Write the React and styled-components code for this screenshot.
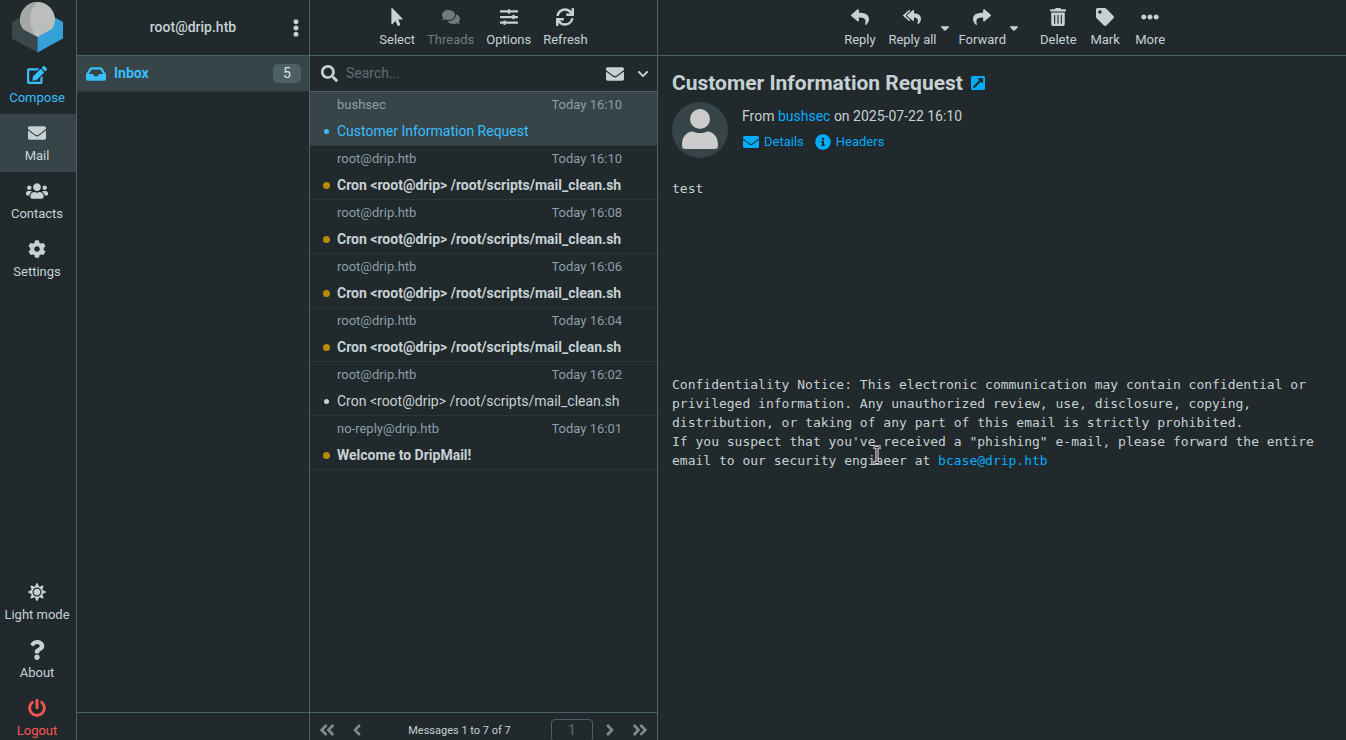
import React, { useState } from "react";
import styled, { createGlobalStyle, css } from "styled-components";
import {
  FaAngleDoubleLeft,
  FaAngleDoubleRight,
  FaAngleLeft,
  FaAngleRight,
  FaCaretDown,
  FaChevronDown,
  FaCog,
  FaComments,
  FaEdit,
  FaEllipsisH,
  FaEllipsisV,
  FaEnvelope,
  FaExternalLinkSquareAlt,
  FaInbox,
  FaInfoCircle,
  FaMousePointer,
  FaPowerOff,
  FaQuestion,
  FaReply,
  FaReplyAll,
  FaSearch,
  FaShare,
  FaSlidersH,
  FaSun,
  FaSync,
  FaTag,
  FaTrashAlt,
  FaUsers
} from "react-icons/fa";

const colors = {
  bg: "#21292c",
  selected: "#374549",
  border: "#4d6066",
  rowBorder: "#2c373a",
  text: "#c5d1d3",
  muted: "#8b9fa7",
  hint: "#5f6f74",
  main: "#37beff",
  link: "#00acff",
  danger: "#ff5552",
  flag: "#b98a04"
};

const GlobalStyle = createGlobalStyle`
  * { box-sizing: border-box; }
  body {
    margin: 0;
    overflow: hidden;
    background: ${colors.bg};
    color: ${colors.text};
    font-family: Roboto, sans-serif;
    font-size: 14px;
    line-height: 21px;
  }
  button, input { font: inherit; color: inherit; }
  button { background: none; border: 0; padding: 0; cursor: pointer; }
  a { color: ${colors.link}; text-decoration: none; }
  svg { display: block; flex: none; }
`;

// a little taller than the window, the bottom bars run off its edge
const Layout = styled.div`
  display: flex;
  height: calc(100vh + 7px);
`;

const TaskMenu = styled.nav`
  display: flex;
  flex-direction: column;
  flex: none;
  width: 77px;
  border-right: 1px solid ${colors.border};
`;

const Logo = styled.svg`
  width: 52px;
  height: 52px;
  margin: 1px auto 3px 11px;
`;

const TaskLink = styled.a`
  display: flex;
  flex-direction: column;
  align-items: center;
  gap: 4px;
  height: 58px;
  padding: 9px 2px 0 0;
  font-size: 13px;
  line-height: 18px;
  white-space: nowrap;
  color: ${p => p.$color || colors.text};
  background: ${p => (p.$selected ? colors.selected : "transparent")};
  svg {
    height: 20px;
  }
`;

const Spacer = styled.div`
  flex: 1;
`;

const Column = styled.section`
  display: flex;
  flex-direction: column;
  min-width: 0;
  border-right: 1px solid ${colors.border};
  ${p => (p.$width ? css`flex: 0 0 ${p.$width}px;` : css`flex: 1; border-right: 0;`)}
`;

const Header = styled.header`
  display: flex;
  justify-content: center;
  flex: none;
  height: 56px;
  border-bottom: 1px solid ${colors.border};
`;

const AccountHeader = styled(Header)`
  align-items: center;
  padding: 0 3px 0 23px;
`;

const Account = styled.h2`
  flex: 1;
  margin: 0;
  font-size: 14px;
  font-weight: 500;
  text-align: center;
`;

const IconButton = styled.button`
  display: flex;
  align-items: center;
  justify-content: center;
  width: ${p => p.$width || 20}px;
  height: 28px;
  color: ${p => (p.$dim ? "#7c888b" : colors.text)};
`;

const Toolbar = styled(Header)`
  padding-left: ${p => (p.$shift ? 6 : 0)}px;
`;

const ToolButton = styled.button`
  display: flex;
  flex-direction: column;
  align-items: center;
  gap: 4px;
  min-width: ${p => p.$min || 0}px;
  padding: 8px 6px 0;
  font-size: 13px;
  line-height: 19px;
  white-space: nowrap;
  &:disabled {
    color: #6f7a7d;
  }
`;

const Caret = styled.button`
  display: flex;
  align-items: center;
  justify-content: center;
  width: 12px;
  height: 55px;
  margin: 0 ${p => (p.$wide ? 14 : 2)}px 0 -4px;
`;

const Folder = styled.a`
  display: flex;
  align-items: center;
  gap: 8px;
  height: 36px;
  padding: 0 8px 0 9px;
  border-bottom: 1px solid #2c373a;
  background: ${colors.selected};
  color: ${colors.main};
  font-weight: 700;
`;

const Badge = styled.span`
  margin-left: auto;
  min-width: 28px;
  border-radius: 5px;
  background: ${colors.border};
  color: #dbe3e5;
  font-weight: 400;
  line-height: 19px;
  text-align: center;
`;

const Footer = styled.footer`
  display: flex;
  align-items: center;
  flex: none;
  height: 35px;
  margin-top: auto;
  padding: 0 2px 0 7px;
  border-top: 1px solid ${colors.border};
  font-size: 12px;
`;

const SearchBar = styled.form`
  display: flex;
  align-items: center;
  flex: none;
  height: 36px;
  padding: 0 0 0 11px;
  border-bottom: 1px solid ${colors.border};
`;

const SearchInput = styled.input`
  flex: 1;
  min-width: 0;
  padding: 0 8px;
  border: 0;
  outline: 0;
  background: none;
  &::placeholder {
    color: ${colors.hint};
    opacity: 1;
  }
`;

const MessageList = styled.ul`
  margin: 0;
  padding: 0;
  list-style: none;
`;

const MessageRow = styled.li`
  display: grid;
  grid-template-columns: 27px 1fr auto;
  grid-template-rows: 25px 28px;
  align-items: center;
  height: 54px;
  padding: 0 35px 0 0;
  border-bottom: 1px solid ${colors.rowBorder};
  background: ${p => (p.$selected ? colors.selected : "transparent")};
  cursor: pointer;
`;

const Meta = styled.span`
  color: ${colors.muted};
  font-size: 13px;
  ${p => p.$first && css`grid-column: 2;`}
`;

const Dot = styled.span`
  justify-self: end;
  width: ${p => (p.$unread ? 7 : 5)}px;
  height: ${p => (p.$unread ? 7 : 5)}px;
  margin-right: ${p => (p.$unread ? 7 : 8)}px;
  border-radius: 50%;
  background: ${p => p.$color};
`;

const Subject = styled.a`
  grid-column: 2 / 4;
  overflow: hidden;
  white-space: nowrap;
  color: ${p => (p.$selected ? colors.main : colors.text)};
  font-weight: ${p => (p.$unread ? 700 : 400)};
`;

const Count = styled.span`
  flex: 1;
  padding-right: 9px;
  font-size: 11px;
  text-align: center;
`;

const PageInput = styled.input`
  width: 42px;
  height: 23px;
  margin-right: 2px;
  border: 1px solid ${colors.border};
  border-radius: 4px;
  background: none;
  color: ${colors.hint};
  font-size: 14px;
  text-align: center;
`;

const MessageHeader = styled.div`
  padding: 14px 14px 0;
`;

const Title = styled.h1`
  display: flex;
  align-items: center;
  gap: 7px;
  margin: 0;
  font-size: 21px;
  font-weight: 700;
  line-height: 26px;
`;

const Sender = styled.div`
  display: flex;
  gap: 14px;
  margin-top: 6px;
`;

const Photo = styled.svg`
  width: 56px;
  height: 56px;
`;

const Summary = styled.p`
  margin: 4px 0;
`;

const HeaderLinks = styled.div`
  display: flex;
  gap: 10px;
  font-size: 13px;
`;

const HeaderLink = styled.a`
  display: flex;
  align-items: center;
  gap: 5px;
  padding-left: 1px;
`;

const MessageBody = styled.article`
  position: relative;
  padding: 21px 14px;
  font-family: "DejaVu Sans Mono", monospace;
  font-size: 13px;
  line-height: 19px;
`;

const Paragraph = styled.p`
  margin: 0;
  & + & {
    margin-top: ${p => (p.$notice ? 177 : 0)}px;
  }
`;

const Pointer = styled.svg`
  position: absolute;
  left: 213px;
  top: 287px;
  width: 12px;
  height: 20px;
`;

const messages = [
  { id: 7, from: "bushsec", time: "16:10", subject: "Customer Information Request" },
  { id: 6, from: "root@drip.htb", time: "16:10", subject: "Cron <root@drip> /root/scripts/mail_clean.sh", unread: true },
  { id: 5, from: "root@drip.htb", time: "16:08", subject: "Cron <root@drip> /root/scripts/mail_clean.sh", unread: true },
  { id: 4, from: "root@drip.htb", time: "16:06", subject: "Cron <root@drip> /root/scripts/mail_clean.sh", unread: true },
  { id: 3, from: "root@drip.htb", time: "16:04", subject: "Cron <root@drip> /root/scripts/mail_clean.sh", unread: true },
  { id: 2, from: "root@drip.htb", time: "16:02", subject: "Cron <root@drip> /root/scripts/mail_clean.sh" },
  { id: 1, from: "no-reply@drip.htb", time: "16:01", subject: "Welcome to DripMail!", unread: true }
];

const Task = ({ icon: Icon, label, size = 18, ...rest }) => (
  <TaskLink href="#" {...rest}>
    <Icon size={size} />
    {label}
  </TaskLink>
);

const Tool = ({ icon: Icon, label, min, disabled }) => (
  <ToolButton type="button" $min={min} disabled={disabled}>
    <Icon size={18} />
    {label}
  </ToolButton>
);

const dotColor = (message, selected) => {
  if (message.unread) return colors.flag;
  return selected ? colors.main : colors.text;
};

function App() {
  const [selectedId, setSelectedId] = useState(7);
  const [query, setQuery] = useState("");
  const [page, setPage] = useState("1");

  return (
    <>
      <GlobalStyle />
      <Layout>
        <TaskMenu>
          <Logo viewBox="0 0 52 52" aria-hidden="true">
            <path d="M1 21 L26.500 7 L26.500 51.500 L1 37.500Z" fill="#3a474b" />
            <path d="M26.500 7 L52 21 L52 37.500 L26.500 51.500Z" fill="#35a1d8" />
            <path d="M26.500 1A17.600 17.600 0 0 0 9 18.600C9 23 10.500 26.500 13 28.500L26.500 36L40 28.500C42.500 26.500 44 23 44 18.600A17.600 17.600 0 0 0 26.500 1Z" fill="#bcbebd" />
            <path d="M26.500 1A17.600 17.600 0 0 0 9 18.600C9 23 10.500 26.500 13 28.500L25 35C17 25 17 10 26.500 1Z" fill="#a5a7a6" />
          </Logo>
          <Task icon={FaEdit} label="Compose" size={20} $color={colors.main} />
          <Task icon={FaEnvelope} label="Mail" $selected />
          <Task icon={FaUsers} label="Contacts" size={22} />
          <Task icon={FaCog} label="Settings" />
          <Spacer />
          <Task icon={FaSun} label="Light mode" />
          <Task icon={FaQuestion} label="About" />
          <Task icon={FaPowerOff} label="Logout" $color={colors.danger} />
        </TaskMenu>

        <Column $width={233}>
          <AccountHeader>
            <Account>root@drip.htb</Account>
            <IconButton type="button" aria-label="Folder actions">
              <FaEllipsisV size={18} />
            </IconButton>
          </AccountHeader>
          <Folder href="#">
            <FaInbox size={20} />
            Inbox
            <Badge>5</Badge>
          </Folder>
          <Footer />
        </Column>

        <Column $width={348}>
          <Toolbar>
            <Tool icon={FaMousePointer} label="Select" />
            <Tool icon={FaComments} label="Threads" disabled />
            <Tool icon={FaSlidersH} label="Options" />
            <Tool icon={FaSync} label="Refresh" />
          </Toolbar>
          <SearchBar onSubmit={e => e.preventDefault()}>
            <FaSearch size={17} />
            <SearchInput
              aria-label="Search"
              placeholder="Search..."
              value={query}
              onChange={e => setQuery(e.target.value)}
            />
            <IconButton type="button" aria-label="Unread only" $width={28}>
              <FaEnvelope size={18} />
            </IconButton>
            <IconButton type="button" aria-label="Search options" $width={28}>
              <FaChevronDown size={12} />
            </IconButton>
          </SearchBar>
          <MessageList>
            {messages.map(message => {
              const selected = message.id === selectedId;
              return (
                <MessageRow
                  key={message.id}
                  $selected={selected}
                  onClick={() => setSelectedId(message.id)}
                >
                  <Meta $first>{message.from}</Meta>
                  <Meta>Today {message.time}</Meta>
                  <Dot $unread={message.unread} $color={dotColor(message, selected)} />
                  <Subject href="#" $unread={message.unread} $selected={selected}>
                    {message.subject}
                  </Subject>
                </MessageRow>
              );
            })}
          </MessageList>
          <Footer>
            <IconButton type="button" aria-label="First page" $dim>
              <FaAngleDoubleLeft size={18} />
            </IconButton>
            <IconButton type="button" aria-label="Previous page" $width={40} $dim>
              <FaAngleLeft size={18} />
            </IconButton>
            <Count>Messages 1 to 7 of 7</Count>
            <PageInput
              aria-label="Page"
              value={page}
              onChange={e => setPage(e.target.value)}
            />
            <IconButton type="button" aria-label="Next page" $width={30} $dim>
              <FaAngleRight size={18} />
            </IconButton>
            <IconButton type="button" aria-label="Last page" $width={30} $dim>
              <FaAngleDoubleRight size={18} />
            </IconButton>
          </Footer>
        </Column>

        <Column>
          <Toolbar $shift>
            <Tool icon={FaReply} label="Reply" min={45} />
            <Tool icon={FaReplyAll} label="Reply all" />
            <Caret type="button" aria-label="Reply all options">
              <FaCaretDown size={14} />
            </Caret>
            <Tool icon={FaShare} label="Forward" />
            <Caret type="button" aria-label="Forward options" $wide>
              <FaCaretDown size={14} />
            </Caret>
            <Tool icon={FaTrashAlt} label="Delete" />
            <Tool icon={FaTag} label="Mark" min={45} />
            <Tool icon={FaEllipsisH} label="More" min={45} />
          </Toolbar>
          <MessageHeader>
            <Title>
              Customer Information Request
              <a href="#" aria-label="Open in new window">
                <FaExternalLinkSquareAlt size={16} />
              </a>
            </Title>
            <Sender>
              <Photo viewBox="0 0 56 56" aria-hidden="true">
                <circle cx="28" cy="28" r="28" fill={colors.selected} />
                <circle cx="28" cy="17" r="10" fill="#ccc" />
                <path d="M10 43C10 34 15 29.500 21 29.500C25 31.500 31 31.500 35 29.500C41 29.500 46 34 46 43C46 46 45 47 43 47H13C11 47 10 46 10 43Z" fill="#ccc" />
              </Photo>
              <div>
                <Summary>
                  From <a href="#">bushsec</a> on 2025-07-22 16:10
                </Summary>
                <HeaderLinks>
                  <HeaderLink href="#">
                    <FaEnvelope size={16} />
                    Details
                  </HeaderLink>
                  <HeaderLink href="#">
                    <FaInfoCircle size={16} />
                    Headers
                  </HeaderLink>
                </HeaderLinks>
              </div>
            </Sender>
          </MessageHeader>
          <MessageBody>
            <Paragraph>test</Paragraph>
            <Paragraph $notice>
              Confidentiality Notice: This electronic communication may contain confidential or
              <br />
              privileged information. Any unauthorized review, use, disclosure, copying,
              <br />
              distribution, or taking of any part of this email is strictly prohibited.
              <br />
              If you suspect that you've received a "phishing" e-mail, please forward the entire
              <br />
              email to our security engineer at <a href="#">bcase@drip.htb</a>
            </Paragraph>
            <Pointer viewBox="0 0 12 20" aria-hidden="true">
              <path d="M2 2H5L6 3L7 2H10M6 3V17M2 18H5L6 17L7 18H10" fill="none" stroke="#fff" strokeWidth="3" />
              <path d="M2 2H5L6 3L7 2H10M6 3V17M2 18H5L6 17L7 18H10" fill="none" stroke="#000" strokeWidth="1" />
            </Pointer>
          </MessageBody>
        </Column>
      </Layout>
    </>
  );
}

export default App;
